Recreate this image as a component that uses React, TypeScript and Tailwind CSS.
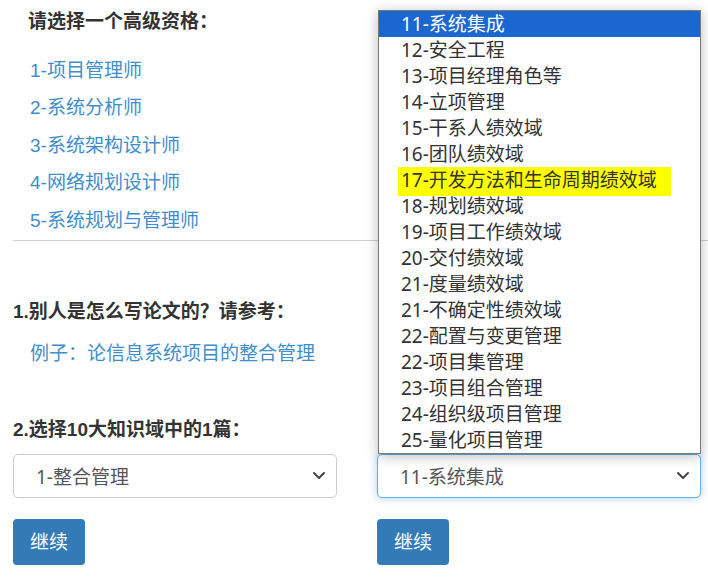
import React from "react";

const quals = ["1-项目管理师", "2-系统分析师", "3-系统架构设计师", "4-网络规划设计师", "5-系统规划与管理师"];

const options = [
  "11-系统集成",
  "12-安全工程",
  "13-项目经理角色等",
  "14-立项管理",
  "15-干系人绩效域",
  "16-团队绩效域",
  "17-开发方法和生命周期绩效域",
  "18-规划绩效域",
  "19-项目工作绩效域",
  "20-交付绩效域",
  "21-度量绩效域",
  "21-不确定性绩效域",
  "22-配置与变更管理",
  "22-项目集管理",
  "23-项目组合管理",
  "24-组织级项目管理",
  "25-量化项目管理",
];

function Chevron() {
  return (
    <svg width="14" height="9" viewBox="0 0 14 9" className="shrink-0">
      <path d="M2 2 L7 7 L12 2" fill="none" stroke="#444" strokeWidth="2" strokeLinecap="round" strokeLinejoin="round" />
    </svg>
  );
}

function FakeSelect({ value, focused }: { value: string; focused?: boolean }) {
  return (
    <div
      className={
        focused
          ? "h-[44px] w-[324px] rounded-[5px] border border-[#66afe9] bg-white pl-[22px] pr-[10px] flex items-center justify-between font-['Noto_Sans','Noto_Sans_CJK_SC',sans-serif] text-[19px] text-[#555] shadow-[0_0_8px_rgba(102,175,233,0.6)]"
          : "h-[44px] w-[324px] rounded-[5px] border border-[#ccc] bg-white pl-[22px] pr-[10px] flex items-center justify-between font-['Noto_Sans','Noto_Sans_CJK_SC',sans-serif] text-[19px] text-[#555]"
      }
    >
      <span className="pt-[3px]">{value}</span>
      <Chevron />
    </div>
  );
}

export default function App() {
  return (
    <div className="relative w-[708px] h-[584px] overflow-hidden bg-white font-['Liberation_Sans','Noto_Sans_CJK_SC',sans-serif] text-[#333]">
      <div className="pt-[9px]">
        <div className="pl-[28px] h-[26px] leading-[26px] text-[19px] font-bold text-[#333]">请选择一个高级资格：</div>
        <div className="mt-[17px] pl-[30px] flex flex-col">
          {quals.map((q) => (
            <div key={q} className="h-[37.5px] flex items-center text-[19px] text-[#3f8dcc]">
              {q}
            </div>
          ))}
        </div>
        <div className="ml-[13px] h-px bg-[#cfcfcf]" />
      </div>

      <div className="grid grid-cols-[364px_1fr] pl-[13px]">
        <div className="flex flex-col">
          <div className="mt-[58px] h-[26px] leading-[26px] text-[19px] font-bold">1.别人是怎么写论文的？请参考：</div>
          <div className="mt-[16px] pl-[17px] h-[26px] leading-[26px] text-[19px] text-[#3f8dcc]">例子：论信息系统项目的整合管理</div>
          <div className="mt-[50px] h-[26px] leading-[26px] text-[19px] font-bold">2.选择10大知识域中的1篇：</div>
          <div className="mt-[11px]">
            <FakeSelect value="1-整合管理" />
          </div>
          <button className="mt-[21px] w-[72px] h-[46px] pt-[4px] rounded-[4px] bg-[#337ab7] text-white text-[19px]">继续</button>
        </div>
        <div className="flex flex-col">
          <div className="mt-[213px]">
            <FakeSelect value="11-系统集成" focused />
          </div>
          <button className="mt-[21px] w-[72px] h-[46px] pt-[4px] rounded-[4px] bg-[#337ab7] text-white text-[19px]">继续</button>
        </div>
      </div>

      <div className="absolute left-[378px] top-[10px] w-[323px] h-[444px] border border-[#7a7a7a] bg-white shadow-[0_2px_12px_rgba(0,0,0,0.28)] font-['Noto_Sans','Noto_Sans_CJK_SC',sans-serif] text-[19px] text-[#333]">
        {options.map((o, i) => (
          <div
            key={o}
            className={
              i === 0
                ? "h-[26px] leading-[26px] pl-[22px] bg-[#1a67d2] text-white"
                : "h-[26px] leading-[26px] pl-[22px]"
            }
          >
            {i === 6 ? (
              <span className="inline-block -ml-[3px] pl-[3px] pr-[14px] h-[29px] leading-[27px] bg-[#ffff00]">{o}</span>
            ) : (
              o
            )}
          </div>
        ))}
      </div>
    </div>
  );
}
